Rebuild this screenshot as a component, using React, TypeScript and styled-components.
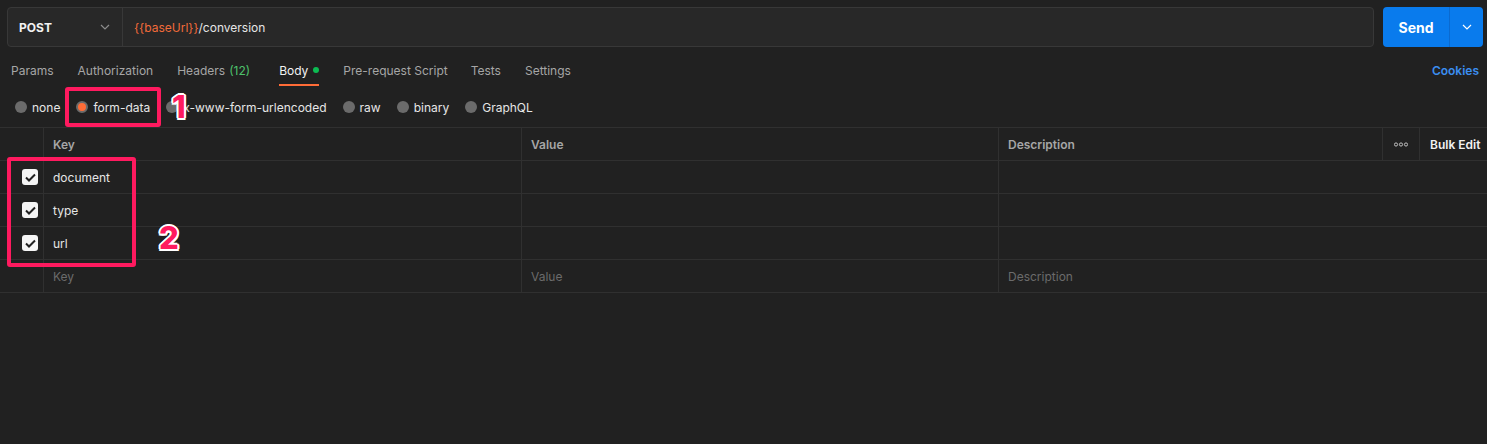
import React from "react";
import styled, { createGlobalStyle } from "styled-components";

const Global = createGlobalStyle`
  html, body { margin: 0; padding: 0; background: #212121; }
  body { font-family: Inter, "Noto Sans", "Liberation Sans", sans-serif; -webkit-font-smoothing: antialiased; }
  * { box-sizing: border-box; }
`;

const Page = styled.div`
  position: relative;
  width: 1487px;
  height: 444px;
  background: #212121;
  overflow: hidden;
`;

const TopBar = styled.div`
  display: flex;
  gap: 9px;
  padding: 7px 4px 0 7px;
  height: 47px;
`;

const UrlGroup = styled.div`
  flex: 1;
  display: flex;
  border: 1px solid #383838;
  border-radius: 4px;
  background: #282828;
  height: 40px;
`;

const Method = styled.div`
  width: 115px;
  display: flex;
  align-items: center;
  justify-content: space-between;
  padding: 0 12px 0 11px;
  border-right: 1px solid #383838;
  color: #f2f2f2;
  font-weight: 700;
  font-size: 12px;
`;

const UrlText = styled.div`
  display: flex;
  align-items: center;
  padding-left: 11px;
  font-size: 12px;
  color: #e6e6e6;
`;

const Var = styled.span`
  color: #f26b3a;
`;

const SendButton = styled.div`
  width: 100px;
  height: 40px;
  display: flex;
  border-radius: 4px;
  background: #097bed;
  color: #fff;
`;

const SendLabel = styled.div`
  flex: 1;
  display: flex;
  align-items: center;
  justify-content: center;
  font-weight: 700;
  font-size: 14px;
  border-right: 1px solid #0a6ad0;
`;

const SendArrow = styled.div`
  width: 33px;
  display: flex;
  align-items: center;
  justify-content: center;
`;

const Tabs = styled.div`
  display: flex;
  align-items: stretch;
  height: 40px;
  padding: 0 8px 0 11px;
`;

const Tab = styled.div<{ $active?: boolean; $gap?: number }>`
  position: relative;
  display: flex;
  align-items: center;
  margin-right: ${(p) => p.$gap ?? 24}px;
  padding-top: 6px;
  font-size: 12px;
  color: ${(p) => (p.$active ? "#f2f2f2" : "#a6a6a6")};
  ${(p) =>
    p.$active &&
    `&::after { content: ""; position: absolute; left: 0; right: 0; bottom: 1px; height: 2px; background: #ff6c37; }`}
`;

const Count = styled.span`
  color: #4ec26c;
  margin-left: 4px;
`;

const Dot = styled.span`
  width: 6px;
  height: 6px;
  border-radius: 50%;
  background: #0cbb52;
  margin-left: 5px;
`;

const Cookies = styled.div`
  margin-left: auto;
  display: flex;
  align-items: center;
  padding-top: 6px;
  color: #3b8ef0;
  font-size: 12px;
  font-weight: 600;
`;

const RadioRow = styled.div`
  display: flex;
  align-items: center;
  height: 40px;
  padding: 0 0 0 15px;
`;

const RadioItem = styled.div`
  display: flex;
  align-items: center;
  margin-right: 16px;
  font-size: 12px;
  color: #e6e6e6;
`;

const Circle = styled.span<{ $on?: boolean }>`
  width: 12px;
  height: 12px;
  border-radius: 50%;
  margin-right: 5px;
  background: ${(p) => (p.$on ? "#ff6c37" : "#6b6b6b")};
  ${(p) => p.$on && `border: 2px solid #6b6b6b;`}
`;

const Table = styled.div`
  border-top: 1px solid #303030;
`;

const Row = styled.div`
  display: grid;
  grid-template-columns: 44px 478px 477px 384px 37px 67px;
  height: 33px;
  border-bottom: 1px solid #303030;
`;

const Cell = styled.div<{ $head?: boolean; $ph?: boolean; $center?: boolean; $open?: boolean }>`
  display: flex;
  align-items: center;
  justify-content: ${(p) => (p.$center ? "center" : "flex-start")};
  padding: 0 9px;
  border-right: ${(p) => (p.$open ? "none" : "1px solid #303030")};
  font-size: 12px;
  white-space: nowrap;
  font-weight: ${(p) => (p.$head ? 600 : 400)};
  color: ${(p) => (p.$head ? "#a6a6a6" : p.$ph ? "#6b6b6b" : "#e6e6e6")};
  &:last-child { border-right: none; }
`;

const CheckCell = styled(Cell)`
  justify-content: flex-end;
  padding: 0 5px 0 0;
`;

const BulkEdit = styled(Cell)`
  color: #f2f2f2;
  padding-left: 10px;
`;

const Check = styled.span`
  width: 16px;
  height: 16px;
  border-radius: 3px;
  background: #f5f5f5;
  display: flex;
  align-items: center;
  justify-content: center;
`;

const Highlight = styled.div`
  position: absolute;
  border: 4px solid #ff1a5f;
  border-radius: 3px;
`;

const Num = styled.div`
  position: absolute;
  font-family: Inter, "Liberation Sans", sans-serif;
  font-weight: 800;
  font-size: 31px;
  color: #ff1a5f;
  text-shadow: 0 0 1px #fff, 1.5px 1.5px 0 #fff, -1.5px -1.5px 0 #fff, 1.5px -1.5px 0 #fff, -1.5px 1.5px 0 #fff, 0 2px 0 #fff, 0 -2px 0 #fff, 2px 0 0 #fff, -2px 0 0 #fff;
  line-height: 1;
`;

const Chevron = ({ color }: { color: string }) => (
  <svg width="10" height="6" viewBox="0 0 10 6" fill="none">
    <path d="M1 1l4 4 4-4" stroke={color} strokeWidth="1.2" />
  </svg>
);

const CheckBox = () => (
  <Check>
    <svg width="11" height="9" viewBox="0 0 11 9" fill="none">
      <path d="M1 4.5l3 3L10 1.5" stroke="#212121" strokeWidth="2" />
    </svg>
  </Check>
);

const rows = ["document", "type", "url"];

export default function App() {
  return (
    <Page>
      <Global />
      <TopBar>
        <UrlGroup>
          <Method>
            POST
            <Chevron color="#8c8c8c" />
          </Method>
          <UrlText>
            <Var>{"{{baseUrl}}"}</Var>/conversion
          </UrlText>
        </UrlGroup>
        <SendButton>
          <SendLabel>Send</SendLabel>
          <SendArrow>
            <Chevron color="#ffffff" />
          </SendArrow>
        </SendButton>
      </TopBar>
      <Tabs>
        <Tab>Params</Tab>
        <Tab>Authorization</Tab>
        <Tab $gap={29}>
          Headers<Count>(12)</Count>
        </Tab>
        <Tab $active>
          Body<Dot />
        </Tab>
        <Tab $gap={23}>Pre-request Script</Tab>
        <Tab>Tests</Tab>
        <Tab>Settings</Tab>
        <Cookies>Cookies</Cookies>
      </Tabs>
      <RadioRow>
        <RadioItem>
          <Circle />
          none
        </RadioItem>
        <RadioItem>
          <Circle $on />
          form-data
        </RadioItem>
        <RadioItem>
          <Circle />
          x-www-form-urlencoded
        </RadioItem>
        <RadioItem>
          <Circle />
          raw
        </RadioItem>
        <RadioItem>
          <Circle />
          binary
        </RadioItem>
        <RadioItem>
          <Circle />
          GraphQL
        </RadioItem>
      </RadioRow>
      <Table>
        <Row>
          <Cell />
          <Cell $head>Key</Cell>
          <Cell $head>Value</Cell>
          <Cell $head>Description</Cell>
          <Cell $head $center>
            <svg width="14" height="5" viewBox="0 0 14 5" fill="none">
              <circle cx="2" cy="2.5" r="1.6" stroke="#d0d0d0" strokeWidth="0.9" />
              <circle cx="7" cy="2.5" r="1.6" stroke="#d0d0d0" strokeWidth="0.9" />
              <circle cx="12" cy="2.5" r="1.6" stroke="#d0d0d0" strokeWidth="0.9" />
            </svg>
          </Cell>
          <BulkEdit $head>Bulk Edit</BulkEdit>
        </Row>
        {rows.map((r) => (
          <Row key={r}>
            <CheckCell>
              <CheckBox />
            </CheckCell>
            <Cell>{r}</Cell>
            <Cell />
            <Cell $open />
            <Cell $open />
            <Cell />
          </Row>
        ))}
        <Row>
          <Cell />
          <Cell $ph>Key</Cell>
          <Cell $ph>Value</Cell>
          <Cell $ph $open>Description</Cell>
          <Cell $open />
          <Cell />
        </Row>
      </Table>
      <Highlight style={{ left: 65, top: 87, width: 96, height: 40 }} />
      <Highlight style={{ left: 7, top: 157, width: 129, height: 110 }} />
      <Num style={{ left: 172, top: 91 }}>1</Num>
      <Num style={{ left: 159, top: 222 }}>2</Num>
    </Page>
  );
}
